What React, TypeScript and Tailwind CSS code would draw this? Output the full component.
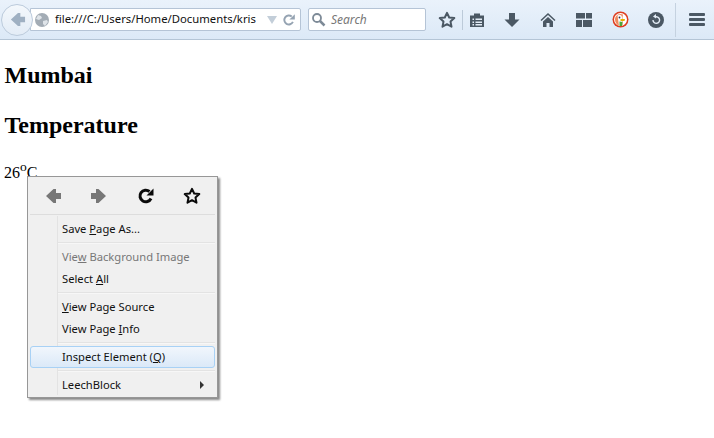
import React from "react";

const ui = { fontFamily: '"Noto Sans", "Open Sans", sans-serif' };
const C = "#4b5864";

function Star({ color = C, size = 18 }: { color?: string; size?: number }) {
  return (
    <svg width={size} height={size} viewBox="0 0 18 18">
      <path d="M9 1.800l2.200 4.700 5.100.6-3.800 3.500 1 5.100L9 13.200l-4.500 2.500 1-5.100L1.700 7.100l5.100-.6z" fill="none" stroke={color} strokeWidth="2" strokeLinejoin="round" />
    </svg>
  );
}

function Arrow({ dir, color, size = 18 }: { dir: "l" | "r"; color: string; size?: number }) {
  return (
    <svg width={size} height={size} viewBox="0 0 18 18" style={{ transform: dir === "r" ? "scaleX(-1)" : undefined }}>
      <path d="M9.500 2L2 9l7.500 7h2.500V12h5V6h-5V2z" fill={color} />
    </svg>
  );
}

function Reload({ color, size = 18, width = 3 }: { color: string; size?: number; width?: number }) {
  return (
    <svg width={size} height={size} viewBox="0 0 18 18">
      <path d="M14 11.500A5.800 5.800 0 1 1 12.500 4.500" fill="none" stroke={color} strokeWidth={width} />
      <path d="M16.500 1.500v7h-7z" fill={color} />
    </svg>
  );
}

function Sep() {
  return <div className="my-[2px] ml-[28px] h-[2px] border-b border-[#f7f7f7] bg-[#e3e3e3]" />;
}

function Item({ children, disabled, active, arrow }: { children: React.ReactNode; disabled?: boolean; active?: boolean; arrow?: boolean }) {
  return (
    <div
      className={`relative flex h-[22px] items-center pr-[10px] text-[11.2px] leading-none ${disabled ? "text-[#777777]" : "text-[#111111]"} ${active ? "rounded-[3px] border border-[#a8d1f5] bg-gradient-to-b from-[#f1f6fc] to-[#dbe9f8] pl-[31px]" : "pl-[32px]"}`}
    >
      <span>{children}</span>
      {arrow && <span className="ml-auto mr-[1px] h-0 w-0 border-y-[4px] border-l-[4px] border-y-transparent border-l-[#333333]" />}
    </div>
  );
}

function U({ children }: { children: React.ReactNode }) {
  return <span className="underline underline-offset-[1px]">{children}</span>;
}

export default function App() {
  return (
    <div className="relative h-[438px] w-[714px] overflow-hidden bg-white" style={ui}>
      <div className="flex h-[40px] items-center border-b border-[#b4c5d6] bg-gradient-to-b from-[#eaf2fb] to-[#dce9f7] pl-[1px] pr-[3px]">
        <div className="relative z-10 flex h-[32px] w-[32px] shrink-0 items-center justify-center rounded-full border border-[#bccbdc] bg-gradient-to-b from-[#f4f8fc] to-[#e3ecf6]">
          <Arrow dir="l" color="#9fb0c2" size={17} />
        </div>
        <div className="-ml-[3px] flex h-[23px] w-[271px] shrink-0 items-center rounded-r-[2px] border border-[#b5c4d6] bg-white pl-[3px]">
          <svg width="16" height="16" viewBox="0 0 16 16" className="shrink-0">
            <circle cx="8" cy="8" r="7" fill="#a3acb5" />
            <path d="M4 3l3 1 1 2-3 2-3-1zM9 9l4-1 1 2-3 4-2-2z" fill="#dfe4e9" />
          </svg>
          <span className="ml-[5px] w-[204px] shrink-0 whitespace-nowrap text-[11.3px] text-[#111111]">file:///C:/Users/Home/Documents/kris</span>
          <span className="ml-[8px] h-0 w-0 border-x-[5px] border-t-[8px] border-x-transparent border-t-[#c3ced9]" />
          <span className="ml-[5px]"><Reload color="#95a3b2" size={14} width={2.5} /></span>
        </div>
        <div className="ml-[7px] flex h-[23px] w-[118px] shrink-0 items-center rounded-[2px] border border-[#b5c4d6] bg-white pl-[2px]">
          <svg width="15" height="15" viewBox="0 0 15 15">
            <circle cx="6" cy="6" r="4" fill="none" stroke="#7d8a97" strokeWidth="1.800" />
            <path d="M9 9l4.500 4.500" stroke="#7d8a97" strokeWidth="2.500" />
          </svg>
          <span className="ml-[5px] text-[12px] italic text-[#777777]">Search</span>
        </div>
        <div className="ml-[12px] flex items-center"><Star /></div>
        <div className="ml-[6px] h-[20px] w-px bg-[#bccad9]" />
        <div className="ml-[6px] flex w-[16px] justify-center">
          <svg width="16" height="18" viewBox="0 0 16 18">
            <path d="M1 4.500h4V2.500h6v2h4V16H1z" fill={C} />
            <path d="M3.500 7.500h1.500v1.500H3.500zM6.500 7.500h6.500v1.500H6.500zM3.500 10.500h1.500v1.500H3.500zM6.500 10.500h6.500v1.500H6.500zM3.500 13h1.500v1.500H3.500zM6.500 13h6.500v1.500H6.500z" fill="#e4edf7" />
          </svg>
        </div>
        <div className="ml-[19px] flex w-[16px] justify-center">
          <svg width="16" height="16" viewBox="0 0 16 16"><path d="M5 1h6v6.500h4.500L8 15 .5 7.500H5z" fill={C} /></svg>
        </div>
        <div className="ml-[20px] flex w-[16px] justify-center">
          <svg width="16" height="16" viewBox="0 0 16 16">
            <path d="M8 1L.5 8l1 1L8 3l6.500 6 1-1z" fill={C} />
            <path d="M3 9.500L8 5l5 4.500V15H9.500v-4h-3v4H3z" fill={C} />
          </svg>
        </div>
        <div className="ml-[20px] flex w-[16px] justify-center">
          <svg width="16" height="14" viewBox="0 0 16 14">
            <path d="M0 0h9v5.500H0zM10 0h6v5.500h-6zM0 7h6v7H0zM7 7h9v7H7z" fill={C} />
          </svg>
        </div>
        <div className="ml-[20px] flex w-[17px] justify-center">
          <svg width="17" height="17" viewBox="0 0 17 17">
            <circle cx="8.500" cy="8.500" r="8" fill="#de3d1f" />
            <circle cx="8.500" cy="8.500" r="6.500" fill="#ffffff" />
            <path d="M3 8.500a5.500 5.500 0 0 1 8-5l-.5 3 .5 8.500H7.500C5 14 3 11.500 3 8.500z" fill="#f08a5d" />
            <path d="M5.500 4.500c2-1.500 4-.5 4.500 1.500l.5 9H7z" fill="#fafafa" />
            <path d="M8.500 8h4.500l-.5 2h-4z" fill="#e8b000" />
            <path d="M7.500 10.500l3 .5-.5 4H7.500z" fill="#4da83a" />
            <circle cx="7.500" cy="6.500" r=".9" fill="#334" />
          </svg>
        </div>
        <div className="ml-[19px] flex w-[16px] justify-center">
          <svg width="16" height="16" viewBox="0 0 16 16">
            <circle cx="8" cy="8" r="8" fill={C} />
            <path d="M5 8a3.300 3.300 0 1 0 2-3" fill="none" stroke="#e4edf7" strokeWidth="1.400" />
            <path d="M8 2v4.500L5 4.500z" fill="#e4edf7" />
          </svg>
        </div>
        <div className="ml-[11px] h-[34px] w-px self-center bg-[#c5d2e0]" />
        <div className="ml-[13px] flex h-[13px] w-[16px] flex-col justify-between">
          <div className="h-[3px] rounded-[1px] bg-[#4b5864]" />
          <div className="h-[3px] rounded-[1px] bg-[#4b5864]" />
          <div className="h-[3px] rounded-[1px] bg-[#4b5864]" />
        </div>
      </div>

      <main className="px-[4.500px] text-black" style={{ fontFamily: '"Liberation Serif", serif' }}>
        <h2 className="mt-[19px] text-[24px] font-bold leading-[32px]">Mumbai</h2>
        <h2 className="mt-[18px] text-[24px] font-bold leading-[32px]">Temperature</h2>
        <p className="-ml-[.5px] mt-[23px] text-[16px] leading-[18px]">26<sup className="text-[13.500px] leading-none">o</sup>C</p>
      </main>

      <div className="absolute left-[27px] top-[176px] h-[222px] w-[191px] border border-[#979797] bg-[#f0f0f0] px-[2px] pt-[2px] shadow-[2px_2px_2px_#8a8a8a]" style={ui}>
        <div className="absolute bottom-[2px] left-[29px] top-[39px] w-px bg-[#e3e3e3]" />
        <div className="flex h-[36px] items-center gap-[28px] border-b border-[#dddddd] pb-[2px] pl-[14px]">
          <Arrow dir="l" color="#777777" />
          <Arrow dir="r" color="#777777" />
          <span className="ml-[1px] flex"><Reload color="#0a0a0a" /></span>
          <Star color="#0a0a0a" />
        </div>
        <div className="relative">
          <div className="mt-[3px]"><Item>Save <U>P</U>age As...</Item></div>
          <Sep />
          <Item disabled>Vie<U>w</U> Background Image</Item>
          <Item>Select <U>A</U>ll</Item>
          <Sep />
          <Item><U>V</U>iew Page Source</Item>
          <Item>View Page <U>I</U>nfo</Item>
          <Sep />
          <Item active>Inspect Element (<U>Q</U>)</Item>
          <Sep />
          <Item arrow>LeechBlock</Item>
        </div>
      </div>
    </div>
  );
}
